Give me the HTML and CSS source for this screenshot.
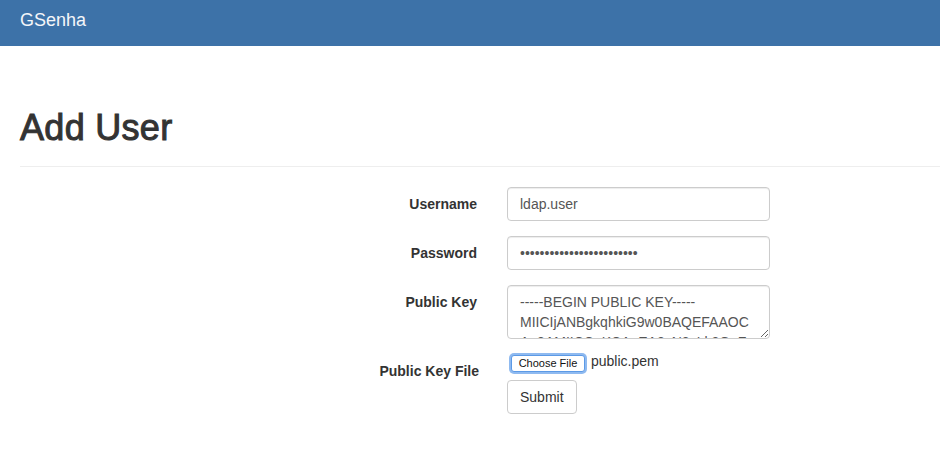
FILE: index.html
```html
<!DOCTYPE html>
<html lang="en">
<head>
<meta charset="utf-8">
<title>GSenha - Add User</title>
<link rel="stylesheet" href="styles.css">
</head>
<body>
<nav class="navbar">
  <a class="brand" href="#">GSenha</a>
</nav>
<div class="page-header">
  <h1>Add User</h1>
</div>
<form class="form">
  <div class="group">
    <label class="label" for="username">Username</label>
    <div class="field">
      <input class="control" id="username" type="text" value="ldap.user">
    </div>
  </div>
  <div class="group">
    <label class="label" for="password">Password</label>
    <div class="field">
      <input class="control" id="password" type="password" value="abcdefghijklmnopqrstuvwx">
    </div>
  </div>
  <div class="group">
    <label class="label" for="pubkey">Public Key</label>
    <div class="field">
      <textarea class="control area" id="pubkey">-----BEGIN PUBLIC KEY-----
MIICIjANBgkqhkiG9w0BAQEFAAOC
Ag8AMIICCgKCAgEA2vN8xLk3QpZ
-----END PUBLIC KEY-----</textarea>
    </div>
  </div>
  <div class="group group-file">
    <label class="label label-file">Public Key File</label>
    <div class="field">
      <div class="file-row">
        <span class="file-btn">Choose File</span>
        <span class="file-name">public.pem</span>
      </div>
      <button class="btn" type="button">Submit</button>
    </div>
  </div>
</form>
</body>
</html>
```
FILE: styles.css
```css
* { box-sizing: border-box; }
html, body { margin: 0; padding: 0; background: #fff; }
body {
  font-family: "Liberation Sans", Arial, Helvetica, sans-serif;
  font-size: 14px;
  line-height: 20px;
  color: #333;
  overflow: hidden;
}
.navbar {
  height: 46px;
  background: #3d72a8;
  padding: 10px 20px 0;
}
.brand {
  display: block;
  font-size: 18px;
  line-height: 20px;
  color: #f4f6f9;
  text-decoration: none;
}
.page-header {
  margin: 62px 0 20px 20px;
  padding-bottom: 18px;
  border-bottom: 1px solid #eee;
}
.page-header h1 {
  margin: 0;
  font-size: 36px;
  line-height: 40px;
  font-weight: 400;
  letter-spacing: 0.3px;
  -webkit-text-stroke: 1px #333;
  color: #333;
}
.form { margin-left: 20px; }
.group { display: flex; margin-bottom: 15px; }
.label {
  width: 457px;
  margin-right: 30px;
  padding-top: 7px;
  text-align: right;
  font-weight: bold;
  color: #333;
}
.group-file { margin-top: 5px; }
.label-file { width: 459px; margin-right: 28px; }
.field { width: 263px; display: flex; flex-direction: column; align-items: flex-start; }
.control {
  display: block;
  width: 263px;
  height: 34px;
  padding: 6px 12px;
  font-family: "Liberation Sans", Arial, Helvetica, sans-serif;
  font-size: 14px;
  line-height: 20px;
  color: #555;
  background: #fff;
  border: 1px solid #ccc;
  border-radius: 4px;
  box-shadow: inset 0 1px 1px rgba(0,0,0,.075);
  outline: none;
  margin: 0;
}
.area {
  height: 54px;
  overflow: hidden;
  resize: vertical;
  white-space: pre;
}
.file-row { display: flex; align-items: flex-start; height: 18px; }
.file-btn {
  display: inline-block;
  margin: 1px 0 0 4px;
  width: 74px;
  height: 17px;
  font-size: 11px;
  line-height: 15px;
  text-align: center;
  color: #111;
  background: #fff;
  border: 1px solid #5c9ae6;
  border-radius: 3px;
  box-shadow: 0 0 0 2px #8fbaf0;
}
.file-name {
  margin-left: 6px;
  font-size: 14px;
  line-height: 14px;
  color: #333;
}
.btn {
  margin-top: 8px;
  height: 34px;
  padding: 6px 12px;
  font-family: "Liberation Sans", Arial, Helvetica, sans-serif;
  font-size: 14px;
  line-height: 20px;
  color: #333;
  background: #fff;
  border: 1px solid #ccc;
  border-radius: 4px;
  cursor: pointer;
}
```
